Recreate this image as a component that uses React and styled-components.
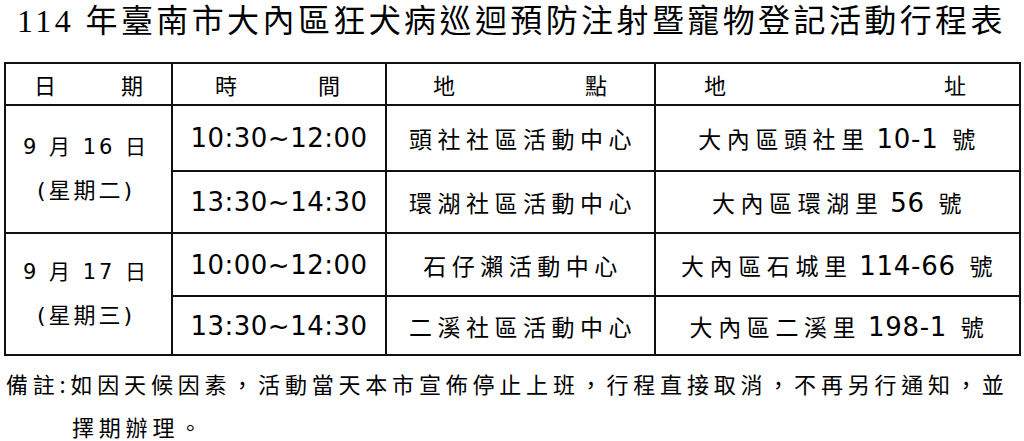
import React from 'react';
import styled, { createGlobalStyle } from 'styled-components';

const Global = createGlobalStyle`
  html, body { margin: 0; padding: 0; background: #fff; }
  body { font-family: "Noto Sans CJK TC", sans-serif; color: #000; }
`;

const CJK = '"Noto Sans CJK TC", "Noto Sans CJK SC", sans-serif';
const LATIN_CJK = '"DejaVu Sans", "Noto Sans CJK TC", sans-serif';

const Page = styled.div`
  width: 1024px;
  height: 441px;
  box-sizing: border-box;
  padding: 0 5px 0 4px;
  overflow: hidden;
`;

const Title = styled.h1`
  margin: 0 0 20px;
  height: 42px;
  line-height: 42px;
  text-align: center;
  font-family: "Liberation Serif", "Noto Sans CJK TC", serif;
  font-weight: 400;
  font-size: 32px;
  letter-spacing: 3.4px;
  white-space: nowrap;
`;

const Table = styled.table`
  width: 100%;
  table-layout: fixed;
  border-collapse: collapse;
  border: 2px solid #111;
`;

const Row = styled.tr`
  height: ${(p) => p.$h}px;
`;

const HeadCell = styled.th`
  border: 2px solid #111;
  padding: 0;
  font-family: ${CJK};
  font-weight: 400;
  font-size: 22px;
  line-height: 1;
`;

const HeadLabel = styled.span`
  display: flex;
  justify-content: space-between;
  padding: 0 ${(p) => p.$pr}px 0 ${(p) => p.$pl}px;
`;

const Cell = styled.td`
  border: 2px solid #111;
  padding: 0;
  text-align: center;
  vertical-align: middle;
  white-space: nowrap;
`;

const DateCell = styled(Cell)`
  font-family: ${LATIN_CJK};
  letter-spacing: 3px;
  padding-right: 5px;
`;

const DateLine = styled.span`
  display: block;
  line-height: 43px;
  font-size: ${(p) => p.$size}px;
`;

const TimeCell = styled(Cell)`
  font-family: "DejaVu Sans", sans-serif;
  font-size: 26px;
  letter-spacing: 0.5px;
`;

const PlaceCell = styled(Cell)`
  font-family: ${CJK};
  font-size: 23px;
  letter-spacing: 5.5px;
  padding-left: 5px;
`;

const AddrCell = styled(Cell)`
  font-family: ${CJK};
  font-size: 23px;
  letter-spacing: 5.6px;
  padding-left: 4px;
`;

const Num = styled.span`
  font-family: "DejaVu Sans", sans-serif;
  font-size: 26px;
  letter-spacing: 0.7px;
  margin: 0 3px 0 -4px;
`;

const Note = styled.div`
  margin-top: 6px;
  padding-left: 2px;
  font-family: ${CJK};
  font-size: 22px;
  line-height: 43px;
  letter-spacing: 4.8px;
`;

const NoteLine = styled.span`
  display: block;
  white-space: nowrap;
  padding-left: ${(p) => p.$indent || 0}px;
`;

const headers = [
  { a: '日', b: '期', pl: 28, pr: 28 },
  { a: '時', b: '間', pl: 42, pr: 45 },
  { a: '地', b: '點', pl: 46, pr: 47 },
  { a: '地', b: '址', pl: 48, pr: 53 },
];

const colWidths = [167, 214, 269, 365];

const schedule = [
  {
    date: '9 月 16 日',
    weekday: '(星期二)',
    slots: [
      { h: 66, time: '10:30~12:00', place: '頭社社區活動中心', addr: '大內區頭社里', no: '10-1' },
      { h: 62, time: '13:30~14:30', place: '環湖社區活動中心', addr: '大內區環湖里', no: '56' },
    ],
  },
  {
    date: '9 月 17 日',
    weekday: '(星期三)',
    slots: [
      { h: 63, time: '10:00~12:00', place: '石仔瀨活動中心', addr: '大內區石城里', no: '114-66' },
      { h: 59, time: '13:30~14:30', place: '二溪社區活動中心', addr: '大內區二溪里', no: '198-1' },
    ],
  },
];

export default function App() {
  return (
    <>
      <Global />
      <Page>
        <Title>114 年臺南市大內區狂犬病巡迴預防注射暨寵物登記活動行程表</Title>
        <Table>
          <colgroup>
            {colWidths.map((w, i) => (
              <col key={i} style={{ width: w }} />
            ))}
          </colgroup>
          <thead>
            <Row $h={42}>
              {headers.map((h, i) => (
                <HeadCell key={i}>
                  <HeadLabel $pl={h.pl} $pr={h.pr}>
                    <span>{h.a}</span>
                    <span>{h.b}</span>
                  </HeadLabel>
                </HeadCell>
              ))}
            </Row>
          </thead>
          <tbody>
            {schedule.map((day, di) =>
              day.slots.map((s, si) => (
                <Row key={`${di}-${si}`} $h={s.h}>
                  {si === 0 && (
                    <DateCell rowSpan={day.slots.length}>
                      <DateLine $size={21}>{day.date}</DateLine>
                      <DateLine $size={22}>{day.weekday}</DateLine>
                    </DateCell>
                  )}
                  <TimeCell>{s.time}</TimeCell>
                  <PlaceCell>{s.place}</PlaceCell>
                  <AddrCell>
                    {s.addr} <Num>{s.no}</Num> 號
                  </AddrCell>
                </Row>
              ))
            )}
          </tbody>
        </Table>
        <Note>
          <NoteLine>備註:如因天候因素，活動當天本市宣佈停止上班，行程直接取消，不再另行通知，並</NoteLine>
          <NoteLine $indent={66}>擇期辦理。</NoteLine>
        </Note>
      </Page>
    </>
  );
}
